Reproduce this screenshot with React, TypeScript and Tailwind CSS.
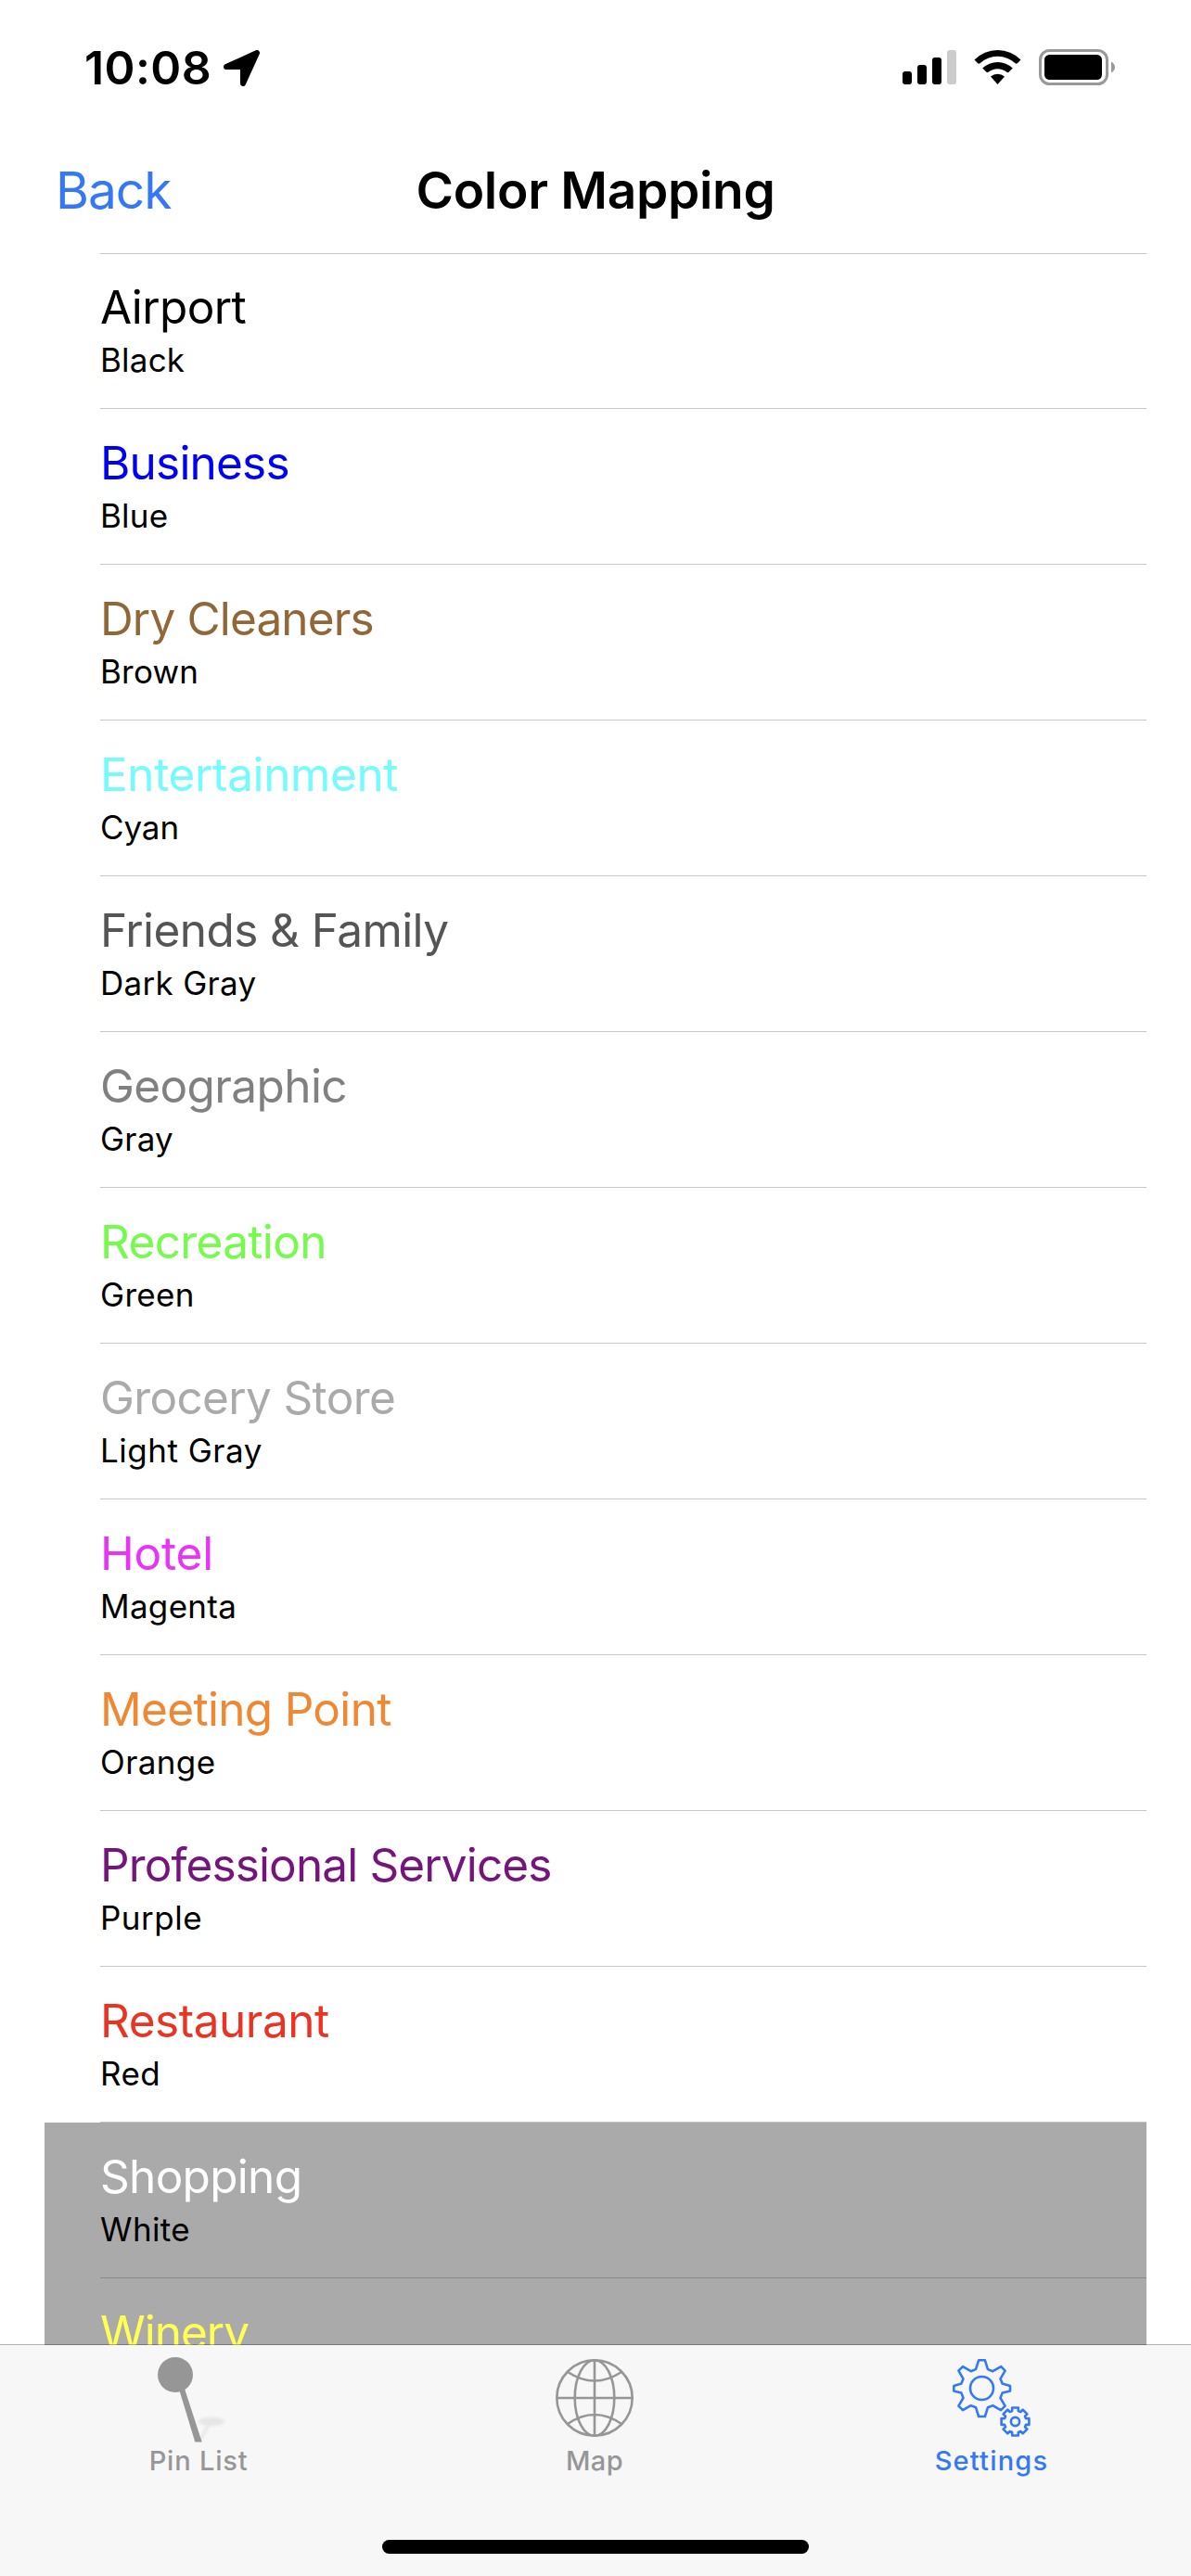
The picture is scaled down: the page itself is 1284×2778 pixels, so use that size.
import React from "react";

type Item = { name: string; label?: string; color: string; shaded?: boolean; labelTrack?: string };

const items: Item[] = [
  { name: "Airport", label: "Black", color: "text-black tracking-[-0.6px]" },
  { name: "Business", label: "Blue", color: "text-[#0000f5] tracking-[-0.8px]" },
  { name: "Dry Cleaners", label: "Brown", color: "text-[#926737] tracking-[-0.85px]" },
  { name: "Entertainment", label: "Cyan", color: "text-[#75fbfd] tracking-[-0.38px]", labelTrack: "tracking-[-0.1px]" },
  { name: "Friends & Family", label: "Dark Gray", color: "text-[#555555] tracking-[-0.57px]", labelTrack: "tracking-[0.3px]" },
  { name: "Geographic", label: "Gray", color: "text-[#808080] tracking-[-0.62px]" },
  { name: "Recreation", label: "Green", color: "text-[#75fb4c] tracking-[-0.65px]", labelTrack: "tracking-[0.3px]" },
  { name: "Grocery Store", label: "Light Gray", color: "text-[#aaaaaa] tracking-[-0.65px]", labelTrack: "tracking-[0.5px]" },
  { name: "Hotel", label: "Magenta", color: "text-[#ea33f7] tracking-[-0.2px]", labelTrack: "tracking-[0.3px]" },
  { name: "Meeting Point", label: "Orange", color: "text-[#f08733] tracking-[-0.68px]", labelTrack: "tracking-[0.4px]" },
  { name: "Professional Services", label: "Purple", color: "text-[#75147c] tracking-[-0.87px]", labelTrack: "tracking-[0.5px]" },
  { name: "Restaurant", label: "Red", color: "text-[#ea3323] tracking-[-0.47px]", labelTrack: "tracking-[0.4px]" },
  { name: "Shopping", label: "White", color: "text-white tracking-[-0.7px]", shaded: true, labelTrack: "tracking-[0.4px]" },
  { name: "Winery", color: "text-[#ffff54] tracking-[-1px]", shaded: true },
];

// Builds a closed gear outline with trapezoid teeth.
function gear(cx: number, cy: number, n: number, ro: number, ri: number, tip: number, root: number) {
  const pts: string[] = [];
  for (let i = 0; i < n; i++) {
    const a = (i * 2 * Math.PI) / n - Math.PI / 2;
    const list: [number, number][] = [[ri, -root], [ro, -tip], [ro, tip], [ri, root]];
    for (const [r, d] of list) {
      pts.push(`${(cx + r * Math.cos(a + d)).toFixed(2)},${(cy + r * Math.sin(a + d)).toFixed(2)}`);
    }
  }
  return pts.join(" ");
}

function StatusBar() {
  return (
    <div className="flex h-[145px] shrink-0 items-start justify-between pl-[91px] pr-[82px]">
      <div className="flex items-start">
        <span className="mt-[43px] w-[148px] whitespace-nowrap text-[50px] font-semibold leading-[60px] tracking-[0.4px]">10:08</span>
        <svg className="mt-[53px] h-[41px] w-[42px]" viewBox="0 0 42 41">
          <path d="M5 19 38 4 23 37V19Z" stroke="#000" strokeWidth="6" strokeLinejoin="round" />
        </svg>
      </div>
      <svg className="mt-[53px] h-[39px] w-[230px]" viewBox="0 0 230 39">
        <rect x="1" y="24" width="10" height="14" rx="3" />
        <rect x="17" y="17" width="10" height="21" rx="3" />
        <rect x="33" y="9" width="10" height="29" rx="3" />
        <rect x="49" y="1" width="10" height="37" rx="3" fill="#ccc" />
        <path d="M78.500 11.500A35 35 0 0 1 128.500 11.500L124.800 15.300A2 2 0 0 1 122.600 15.300A28 28 0 0 0 84.400 15.300A2 2 0 0 1 82.200 15.300Z" />
        <path d="M87.200 20.500A23.500 23.500 0 0 1 119.800 20.500L115.500 24.800Q114.500 25.500 113.500 24.800A15.500 15.500 0 0 0 93.500 24.800Q92.500 25.500 91.500 24.800Z" />
        <path d="M96 29.600A11.500 11.500 0 0 1 111 29.600L103.500 38Z" />
        <rect x="149.500" y="1.500" width="72" height="36" rx="10" fill="none" stroke="#999" strokeWidth="3" />
        <rect x="154" y="6" width="62" height="27" rx="5.500" />
        <path d="M226 13.500Q230 16 230 19.500T226 25.500Z" fill="#999" />
      </svg>
    </div>
  );
}

function NavBar() {
  return (
    <div className="grid h-[128px] shrink-0 grid-cols-3 items-start pt-[25px] leading-[70px]">
      <span className="pl-[60px] text-[55px] tracking-[-1px] text-[#3478f6]">Back</span>
      <h1 className="whitespace-nowrap text-center text-[55px] font-semibold tracking-[-0.3px]">Color Mapping</h1>
    </div>
  );
}

function Row({ item }: { item: Item }) {
  return (
    <li className={`flex h-[168px] shrink-0 flex-col pl-[60px] ${item.shaded ? "bg-[#aaaaaa]" : "bg-white"}`}>
      <div className={`flex h-full flex-col items-start border-b pt-[27px] ${item.shaded ? "border-[#8a8a8a]" : "border-[#c6c6c8]"}`}>
        <span className={`h-[64px] whitespace-nowrap text-[49.5px] leading-[62px] ${item.color}`}>{item.name}</span>
        {item.label && (
          <span className={`h-[48px] whitespace-nowrap text-[35px] leading-[48px] text-black ${item.labelTrack ?? "tracking-[0.2px]"}`}>{item.label}</span>
        )}
      </div>
    </li>
  );
}

function PinIcon() {
  return (
    <svg className="h-[107px] w-[84px] overflow-visible" viewBox="0 0 84 107">
      <defs>
        <filter id="soft" x="-30%" y="-30%" width="160%" height="160%"><feGaussianBlur stdDeviation="1.800" /></filter>
      </defs>
      <g filter="url(#soft)" fill="#e6e6e6" stroke="#e6e6e6">
        <ellipse cx="56" cy="83.500" rx="14" ry="4.500" stroke="none" />
        <path d="M44 103 53 87" strokeWidth="3" />
      </g>
      <path d="M21 48.500 27 48 45.700 105.500H38.300Z" fill="#969696" />
      <circle cx="17" cy="33" r="19" fill="#969696" />
    </svg>
  );
}

function GlobeIcon() {
  return (
    <svg className="h-[84px] w-[84px]" viewBox="0 0 84 84" fill="none" stroke="#969696" strokeWidth="2.600">
      <circle cx="42" cy="42" r="40.700" />
      <ellipse cx="42" cy="42" rx="21.300" ry="40.700" />
      <path d="M42 1V83M1 42H83M13 14Q42 33 71 14M13 70Q42 50 71 70" />
    </svg>
  );
}

function GearsIcon() {
  return (
    <svg className="h-[84px] w-[84px]" viewBox="0 0 84 84" fill="none" stroke="#3478f6" strokeWidth="2.600" strokeLinejoin="round">
      <path d="M28.100 1.300H34.900L38 11.100 43.300 13.200 52.200 8.100 56.600 12.600 51.500 21.300 53.600 26.600 62 29V34.500L53.600 36.600 51.500 42 56.600 50.600 52 55.200 43.300 50.100 38 52.200 34.900 62H28.100L25 52.200 19.700 50.100 11 55.200 6.400 50.600 11.500 42 9.400 36.600 1.300 34.500V29L9.400 26.600 11.500 21.300 6.400 12.600 11 8.100 19.700 13.200 25 11.100Z" />
      <circle cx="31.500" cy="31.500" r="12.500" />
      <polygon points={gear(67.5, 67.5, 8, 15.3, 12, 0.22, 0.28)} />
      <circle cx="67.500" cy="67.500" r="4.600" />
    </svg>
  );
}

function Tab({ label, className, track, children }: { label: string; className: string; track: string; children: React.ReactNode }) {
  return (
    <div className={`flex flex-col items-center ${className}`}>
      <div className="flex h-[108px] items-start">{children}</div>
      <span className={`whitespace-nowrap text-[29px] font-medium leading-[36px] ${track}`}>{label}</span>
    </div>
  );
}

export default function App() {
  return (
    <div className="flex h-[2778px] w-[1284px] flex-col overflow-hidden bg-white font-['Inter',sans-serif] text-black">
      <StatusBar />
      <NavBar />
      <ul className="relative mx-[48px] flex h-[2256px] shrink-0 flex-col overflow-hidden before:absolute before:left-[60px] before:right-0 before:top-0 before:h-px before:bg-[#c6c6c8]">
        {items.map((item) => (
          <Row key={item.name} item={item} />
        ))}
      </ul>
      <nav className="relative -mt-px flex h-[250px] shrink-0 flex-col border-t border-black/30 bg-[#f7f7f7] bg-clip-padding">
        <div className="-mt-px flex h-[211px]">
          <Tab label="Pin List" className="w-[428px] text-[#969696]" track="tracking-[0.8px]"><PinIcon /></Tab>
          <Tab label="Map" className="w-[426px] text-[#969696]" track="tracking-[0.3px]"><div className="pt-4"><GlobeIcon /></div></Tab>
          <Tab label="Settings" className="w-[430px] text-[#3478f6]" track="tracking-[1.2px]"><div className="pt-4"><GearsIcon /></div></Tab>
        </div>
        <div className="mx-auto h-[15px] w-[460px] rounded-full bg-black" />
      </nav>
    </div>
  );
}
